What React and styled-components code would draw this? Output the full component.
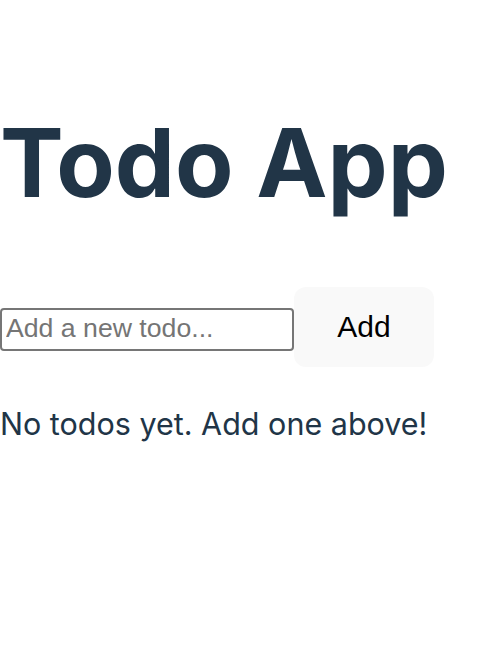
import React, { useState } from 'react';
import styled, { createGlobalStyle } from 'styled-components';

const GlobalStyle = createGlobalStyle`
  body {
    margin: 0;
    background: #ffffff;
    font-family: Inter, "Noto Sans", sans-serif;
    color: #213547;
  }
`;

const App = () => {
  const [text, setText] = useState('');
  const [todos, setTodos] = useState([]);

  const addTodo = () => {
    if (!text.trim()) return;
    setTodos([...todos, text.trim()]);
    setText('');
  };

  return (
    <>
      <GlobalStyle />
      <Wrapper>
        <Heading>Todo App</Heading>
        <Form>
          <Input
            type="text"
            placeholder="Add a new todo..."
            value={text}
            onChange={(e) => setText(e.target.value)}
          />
          <AddButton onClick={addTodo}>Add</AddButton>
        </Form>
        {todos.length === 0 ? (
          <Empty>No todos yet. Add one above!</Empty>
        ) : (
          <List>
            {todos.map((t, i) => (
              <Item key={i}>{t}</Item>
            ))}
          </List>
        )}
      </Wrapper>
    </>
  );
};

const Wrapper = styled.div`
  display: flex;
  flex-direction: column;
  align-items: flex-start;
  padding-top: 105px;
`;

const Heading = styled.h1`
  margin: 0;
  font-size: 95.5px;
  font-weight: 700;
  line-height: 1.2;
  color: #213547;
`;

const Form = styled.div`
  display: flex;
  align-items: baseline;
  margin-top: 67px;
`;

const Input = styled.input`
  width: 294px;
  height: 43px;
  box-sizing: border-box;
  border: 2px solid #767676;
  border-radius: 4px;
  padding: 2px 4px 4px;
  font-family: "Liberation Sans", Arial, sans-serif;
  font-size: 26.67px;
  color: #000;

  &::placeholder {
    color: #757575;
  }
`;

const AddButton = styled.button`
  width: 140px;
  height: 80px;
  border: none;
  border-radius: 12px;
  background: #f9f9f9;
  color: #000;
  font-family: "Liberation Sans", Arial, sans-serif;
  font-size: 30px;
  cursor: pointer;
`;

const Empty = styled.p`
  margin: 38px 0 0;
  font-size: 30.5px;
  color: #213547;
`;

const List = styled.ul`
  margin: 38px 0 0;
  padding: 0;
  list-style: none;
`;

const Item = styled.li`
  font-size: 30px;
`;

export default App;
